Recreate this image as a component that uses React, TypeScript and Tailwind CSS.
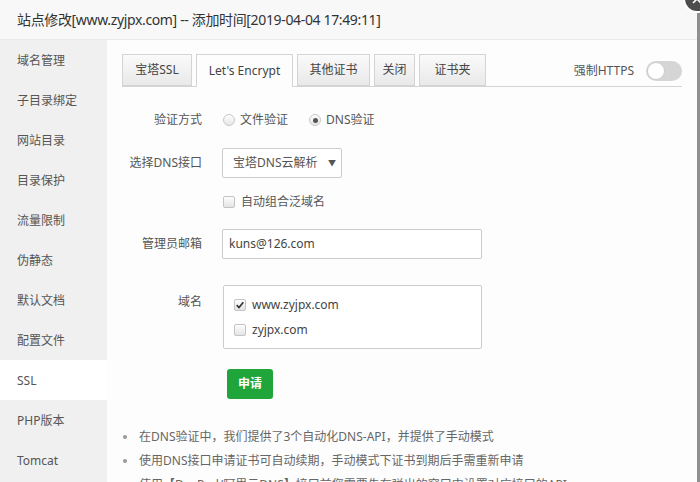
import { useState } from 'react'

const MENU = [
  '域名管理',
  '子目录绑定',
  '网站目录',
  '目录保护',
  '流量限制',
  '伪静态',
  '默认文档',
  '配置文件',
  'SSL',
  'PHP版本',
  'Tomcat',
]

const TABS = [
  { name: '宝塔SSL', w: 'w-[70px]' },
  { name: "Let's Encrypt", w: 'w-[97px]' },
  { name: '其他证书', w: 'w-[73px]' },
  { name: '关闭', w: 'w-[41px]' },
  { name: '证书夹', w: 'w-[67px]' },
]

const TIPS = [
  '在DNS验证中，我们提供了3个自动化DNS-API，并提供了手动模式',
  '使用DNS接口申请证书可自动续期，手动模式下证书到期后手需重新申请',
  '使用【DnsPod/阿里云DNS】接口前您需要先在弹出的窗口中设置对应接口的API',
]

function Radio({ checked }: { checked: boolean }) {
  return (
    <span className="flex h-[12px] w-[12px] items-center justify-center rounded-full border border-[#c8c8c8] bg-gradient-to-b from-[#fdfdfd] to-[#e6e6e6]">
      {checked && <span className="h-[5px] w-[5px] rounded-full bg-[#555]" />}
    </span>
  )
}

function Check({ checked }: { checked: boolean }) {
  return (
    <span className="flex h-[12px] w-[12px] items-center justify-center rounded-[2px] border border-[#c4c4c4] bg-gradient-to-b from-[#fdfdfd] to-[#e4e4e4]">
      {checked && (
        <svg viewBox="0 0 12 12" className="h-[10px] w-[10px]">
          <path d="M2 6.2 L4.8 9 L10 2.6" fill="none" stroke="#333" strokeWidth="2" />
        </svg>
      )}
    </span>
  )
}

export default function App() {
  const [wildcard, setWildcard] = useState(false)
  const [domains, setDomains] = useState([true, false])

  return (
    <div className="relative h-[482px] w-[700px] overflow-hidden bg-[#8f8f8f] font-['Noto_Sans','Noto_Sans_CJK_SC',sans-serif] text-[12px] text-[#333]">
      <div className="flex h-full w-[697px] flex-col bg-white">
        {/* title bar */}
        <div className="flex h-[40px] shrink-0 items-center border-b border-[#e8e8e8] bg-[#f8f8f8] pl-[17px] text-[14px] tracking-[-0.35px] text-[#333]">
          站点修改[www.zyjpx.com] -- 添加时间[2019-04-04 17:49:11]
        </div>

        <div className="flex flex-1">
          {/* side menu */}
          <div className="w-[107px] shrink-0 bg-[#f0f0f0]">
            {MENU.map((m) => (
              <div
                key={m}
                className={`flex h-[40px] items-center pl-[17px] pt-[1px] text-[#555] ${m === 'SSL' ? 'bg-white' : ''}`}
              >
                {m}
              </div>
            ))}
          </div>

          {/* content */}
          <div className="flex-1 bg-[#fdfdfd] px-[15px] pt-[15px]">
            <div className="flex h-[32px] items-end border-b border-[#d4d4d4]">
              {TABS.map((t) => {
                const active = t.name === "Let's Encrypt"
                return (
                  <div
                    key={t.name}
                    className={`mr-[4px] flex h-[32px] items-center justify-center border border-[#d4d4d4] ${t.w} ${
                      active ? '-mb-px h-[33px] border-b-0 bg-[#fdfdfd]' : 'bg-gradient-to-b from-[#fafafa] to-[#e9e9e9]'
                    } text-[#444]`}
                  >
                    {t.name}
                  </div>
                )
              })}
              <div className="ml-auto flex h-[32px] items-center self-start">
                <span className="text-[#555]">强制HTTPS</span>
                <span className="ml-[12px] flex h-[20px] w-[36px] items-center rounded-full bg-[#d5d5d5] p-[1px]">
                  <span className="h-[18px] w-[18px] rounded-full border border-[#ccc] bg-white" />
                </span>
              </div>
            </div>

            {/* form */}
            <div className="mt-[18px] flex h-[30px] items-center">
              <div className="w-[80px] text-right text-[#555]">验证方式</div>
              <div className="ml-[21px] flex items-center text-[#555]">
                <Radio checked={false} />
                <span className="ml-[5px]">文件验证</span>
                <span className="ml-[21px]" />
                <Radio checked />
                <span className="ml-[5px]">DNS验证</span>
              </div>
            </div>

            <div className="mt-[13px] flex h-[30px] items-center">
              <div className="w-[80px] text-right text-[#555]">选择DNS接口</div>
              <div className="ml-[20px] flex h-[30px] w-[120px] items-center justify-between rounded-[2px] border border-[#ccc] bg-white pl-[10px] pr-[5px] text-[#555]">
                <span>宝塔DNS云解析</span>
                <span className="text-[8px]">▼</span>
              </div>
            </div>

            <div className="mt-[14px] flex h-[20px] items-center pl-[101px] text-[#555]">
              <button onClick={() => setWildcard(!wildcard)} className="flex items-center">
                <Check checked={wildcard} />
              </button>
              <span className="ml-[6px]">自动组合泛域名</span>
            </div>

            <div className="mt-[17px] flex h-[30px] items-center">
              <div className="w-[80px] text-right text-[#555]">管理员邮箱</div>
              <div className="ml-[20px] flex h-[30px] w-[260px] items-center rounded-[2px] border border-[#ccc] bg-white pl-[6px] text-[#444]">
                kuns@126.com
              </div>
            </div>

            <div className="mt-[26px] flex">
              <div className="w-[80px] pt-[8px] text-right text-[#555]">域名</div>
              <div className="ml-[21px] h-[64px] w-[259px] rounded-[2px] border border-[#ccc] bg-white pl-[10px] pt-[6px] text-[#444]">
                {['www.zyjpx.com', 'zyjpx.com'].map((d, i) => (
                  <div key={d} className="flex h-[25px] items-center">
                    <button
                      onClick={() => setDomains(domains.map((v, j) => (j === i ? !v : v)))}
                      className="flex items-center"
                    >
                      <Check checked={domains[i]} />
                    </button>
                    <span className="ml-[6px]">{d}</span>
                  </div>
                ))}
              </div>
            </div>

            <div className="mt-[20px] pl-[105px]">
              <button className="h-[30px] w-[46px] rounded-[3px] bg-[#20a53a] text-[12px] font-bold text-white">
                申请
              </button>
            </div>

            <ul className="mt-[26px] text-[#666]">
              {TIPS.map((t) => (
                <li key={t} className="flex h-[24px] items-center whitespace-nowrap">
                  <span className="ml-[1px] mr-[12px] h-[4px] w-[4px] rounded-full bg-[#999]" />
                  {t}
                </li>
              ))}
            </ul>
          </div>
        </div>
      </div>

      {/* close button */}
      <div className="absolute right-[-11px] top-[-15px] flex h-[28px] w-[28px] items-center justify-center rounded-full border-2 border-white bg-[#4d4d4d]">
        <svg viewBox="0 0 10 10" className="h-[10px] w-[10px]">
          <path d="M1 1 L9 9 M9 1 L1 9" stroke="#fff" strokeWidth="1.6" />
        </svg>
      </div>
    </div>
  )
}
